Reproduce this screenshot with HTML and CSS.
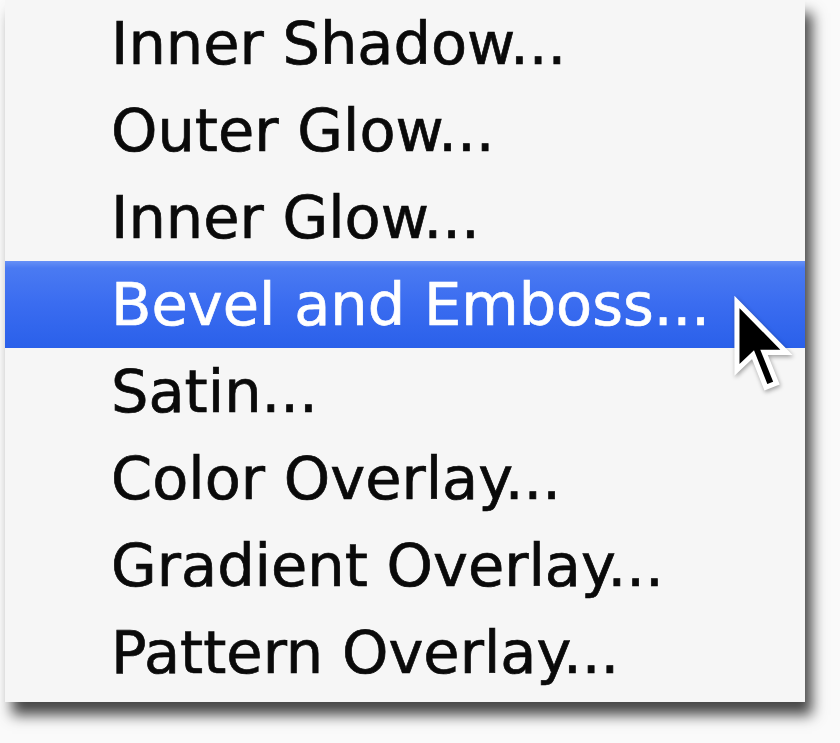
FILE: index.html
```html
<!DOCTYPE html>
<html lang="en">
<head>
    <meta charset="UTF-8">
    <meta name="viewport" content="width=device-width, initial-scale=1.0">
    <title>Layer Style Menu</title>
    <link rel="stylesheet" href="styles.css">
</head>
<body>
    <div class="menu">
        <ul class="menu-list">
            <li class="menu-item">Inner Shadow...</li>
            <li class="menu-item">Outer Glow...</li>
            <li class="menu-item">Inner Glow...</li>
            <li class="menu-item selected">Bevel and Emboss...</li>
            <li class="menu-item">Satin...</li>
            <li class="menu-item">Color Overlay...</li>
            <li class="menu-item">Gradient Overlay...</li>
            <li class="menu-item">Pattern Overlay...</li>
        </ul>
        <!-- mouse pointer resting on the selected row -->
        <svg class="cursor" viewBox="-1.5 -1.5 15 22" width="69" height="101">
            <path d="M0 0 L0 14.8 L3.5 11.5 L6.3 18.6 L8.6 17.7 L5.9 11 L10.8 11 Z"
                  fill="#000" stroke="#fff" stroke-width="1.1" stroke-linejoin="miter"/>
        </svg>
    </div>
</body>
</html>
```

FILE: styles.css
```css
html {
    background: #fafafa;
}
body {
    margin: 0;
    padding: 0 0 41px;
    font-family: "DejaVu Sans", Verdana, sans-serif;
}
.menu {
    position: relative;
    width: 800px;
    margin-left: 5px;
    padding-bottom: 6px;
    background: #f6f6f6;
    box-shadow: 7px 13px 13px rgba(0, 0, 0, 0.72);
}
.menu-list {
    list-style: none;
    margin: 0;
    padding: 0;
}
.menu-item {
    height: 87px;
    line-height: 87px;
    padding-left: 106px;
    font-size: 59px;
    color: #0a0a0a;
    -webkit-text-stroke: 0.7px #0a0a0a;
    white-space: nowrap;
}
.menu-item.selected {
    color: #fff;
    -webkit-text-stroke: 0.7px #fff;
    background: linear-gradient(to bottom, #6690f6 0%, #4a7af2 8%, #3a6cf0 50%, #2a60ea 100%);
}
.cursor {
    position: absolute;
    left: 725px;
    top: 295px;
    filter: drop-shadow(1px 2px 2px rgba(0, 0, 0, 0.35));
}
```
